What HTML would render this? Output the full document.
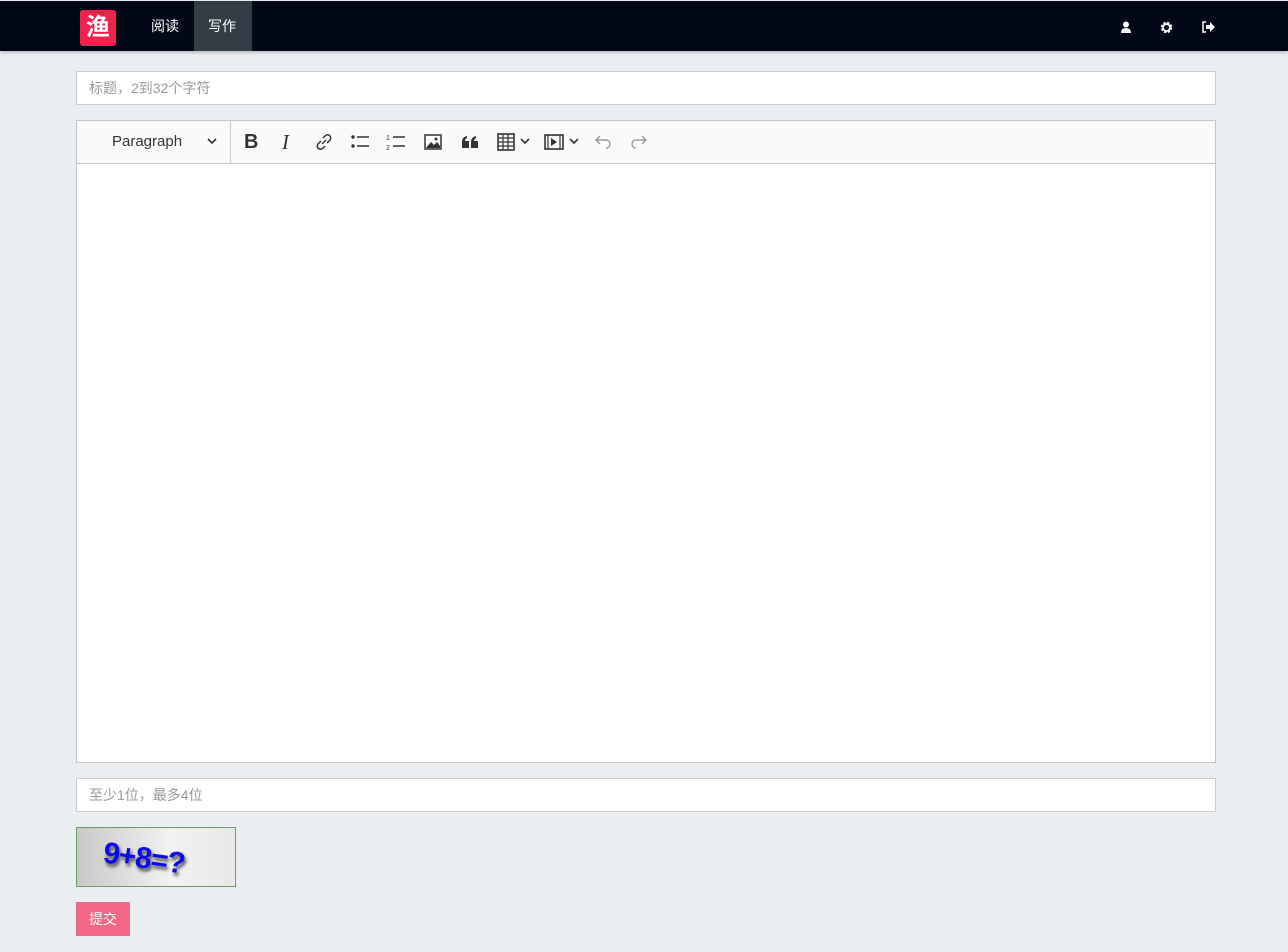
<!DOCTYPE html>
<html><head><meta charset="utf-8"><style>
body{margin:0;width:1288px;height:952px;background:#ebeef0;font-family:"Liberation Sans","Noto Sans CJK SC",sans-serif;position:relative;overflow:hidden}
.nav{position:absolute;left:0;top:1px;width:1288px;height:50px;background:#020818;box-shadow:0 2px 3px rgba(0,0,0,.2)}
.logo{position:absolute;left:80px;top:9px;width:36px;height:36px;background:#f0234d;border-radius:3px;color:#fff;font-size:24px;font-weight:bold;line-height:36px;text-align:center}
.nl{position:absolute;top:0;height:50px;line-height:50px;color:#fff;font-size:14px;padding:0 14px}
.inp{position:absolute;left:76px;background:#fff;border:1px solid #ccc;font-size:14px;color:#999;line-height:32px;padding-left:12px;box-sizing:border-box;width:1140px;height:34px}
.ed{position:absolute;left:76px;top:120px;width:1140px;height:643px;border:1px solid #c4c4c4;box-sizing:border-box;background:#fff}
.tb{height:42px;background:#fafafa;border-bottom:1px solid #c4c4c4;position:relative}
.tb svg{position:absolute;top:12px}
</style></head><body>
<div class="nav">
<div class="logo">渔</div>
<div class="nl" style="left:137px">阅读</div>
<div class="nl" style="left:194px;background:#323d46;width:30px">写作</div>
<svg style="position:absolute;left:1120px;top:20px" width="12" height="12" viewBox="0 0 12 12"><circle cx="6" cy="3.5" r="3" fill="#fff"/><path d="M1 12 Q1 7 6 7 Q11 7 11 12Z" fill="#fff"/></svg>
<svg style="position:absolute;left:1160px;top:20px" width="13" height="13" viewBox="0 0 12 12"><circle cx="6" cy="6" r="4" fill="none" stroke="#fff" stroke-width="2.6" stroke-dasharray="2 1.2"/><circle cx="6" cy="6" r="3.2" fill="none" stroke="#fff" stroke-width="1.6"/></svg>
<svg style="position:absolute;left:1202px;top:20px" width="13" height="12" viewBox="0 0 13 12"><path d="M4 1H1V11H4" fill="none" stroke="#fff" stroke-width="1.5"/><path d="M4 4H8V1L13 6L8 11V8H4Z" fill="#fff"/></svg>
</div>
<div class="inp" style="top:71px">标题，2到32个字符</div>
<div class="ed"><div class="tb">
<span style="position:absolute;left:35px;top:12px;font-size:15px;color:#333">Paragraph</span>
<svg style="left:130px;top:17px" width="10" height="7" viewBox="0 0 10 7"><path d="M1 1L5 5L9 1" fill="none" stroke="#333" stroke-width="1.6"/></svg>
<div style="position:absolute;left:153px;top:0;width:1px;height:42px;background:#ccc"></div>
<span style="position:absolute;left:167px;top:10px;font-size:20px;font-weight:bold;color:#333">B</span>
<span style="position:absolute;left:205px;top:9px;font-size:21px;font-family:'Liberation Serif';font-style:italic;color:#333">I</span>
<svg style="left:238px" width="18" height="18" viewBox="0 0 18 18"><path d="M8 5L10 3A3 3 0 0 1 15 7L12 10M10 13L8 15A3 3 0 0 1 3 11L6 8M7 11L11 7" fill="none" stroke="#333" stroke-width="1.5"/></svg>
<svg style="left:273px" width="20" height="18" viewBox="0 0 20 18"><circle cx="3" cy="4" r="1.7" fill="#333"/><circle cx="3" cy="13" r="1.7" fill="#333"/><path d="M7 4H19M7 13H19" stroke="#333" stroke-width="1.5"/></svg>
<svg style="left:309px" width="20" height="18" viewBox="0 0 20 18"><text x="0" y="7" font-size="7" fill="#333">1</text><text x="0" y="17" font-size="7" fill="#333">2</text><path d="M7 4H19M7 13H19" stroke="#333" stroke-width="1.5"/></svg>
<svg style="left:347px" width="18" height="18" viewBox="0 0 18 18"><rect x="1" y="2" width="16" height="14" fill="none" stroke="#333" stroke-width="1.5"/><path d="M2 15L7 9L10 12L13 9L16 13V15Z" fill="#333"/><circle cx="12" cy="6" r="1.5" fill="#333"/></svg>
<svg style="left:384px;top:14px" width="18" height="14" viewBox="0 0 18 14"><path d="M1 13V7Q1 2 6 1V3Q4 4 4 6H8V13Z M10 13V7Q10 2 15 1V3Q13 4 13 6H17V13Z" fill="#333"/></svg>
<svg style="left:420px" width="18" height="18" viewBox="0 0 18 18"><rect x="1" y="1" width="16" height="16" fill="none" stroke="#333" stroke-width="1.6"/><path d="M1 5H17M1 9H17M1 13H17M6 1V17M11 1V17" stroke="#333" stroke-width="1.2"/></svg>
<svg style="left:443px;top:17px" width="10" height="7" viewBox="0 0 10 7"><path d="M1 1L5 5L9 1" fill="none" stroke="#333" stroke-width="1.6"/></svg>
<svg style="left:467px" width="20" height="18" viewBox="0 0 20 18"><rect x="1" y="2" width="18" height="14" fill="none" stroke="#333" stroke-width="1.6"/><path d="M4 2V16M16 2V16" stroke="#333" stroke-width="1.2"/><path d="M7 5L13 9L7 13Z" fill="#333"/></svg>
<svg style="left:492px;top:17px" width="10" height="7" viewBox="0 0 10 7"><path d="M1 1L5 5L9 1" fill="none" stroke="#333" stroke-width="1.6"/></svg>
<svg style="left:517px" width="18" height="18" viewBox="0 0 18 18"><path d="M6 5L2 9L6 13M2 9H12A4 4 0 0 1 12 17" fill="none" stroke="#999" stroke-width="1.4" transform="translate(0,-2)"/></svg>
<svg style="left:553px" width="18" height="18" viewBox="0 0 18 18"><path d="M12 5L16 9L12 13M16 9H6A4 4 0 0 0 6 17" fill="none" stroke="#999" stroke-width="1.4" transform="translate(0,-2)"/></svg>
</div></div>
<div class="inp" style="top:778px">至少1位，最多4位</div>
<div style="position:absolute;left:76px;top:827px;width:160px;height:60px;box-sizing:border-box;border:1px solid #6a9e5e;background:linear-gradient(90deg,#c8c8c8,#f2f2f2 60%,#e8e8e8);overflow:hidden">
<span style="position:absolute;left:26px;top:14px;font-size:30px;font-weight:bold;color:#0a0af0;letter-spacing:-1px;text-shadow:2px 3px 3px #555;transform:rotate(8deg);display:inline-block">9+8=?</span></div>
<div style="position:absolute;left:76px;top:902px;width:54px;height:34px;background:#f46785;color:#fff;font-size:14px;line-height:34px;text-align:center">提交</div>
</body></html>
